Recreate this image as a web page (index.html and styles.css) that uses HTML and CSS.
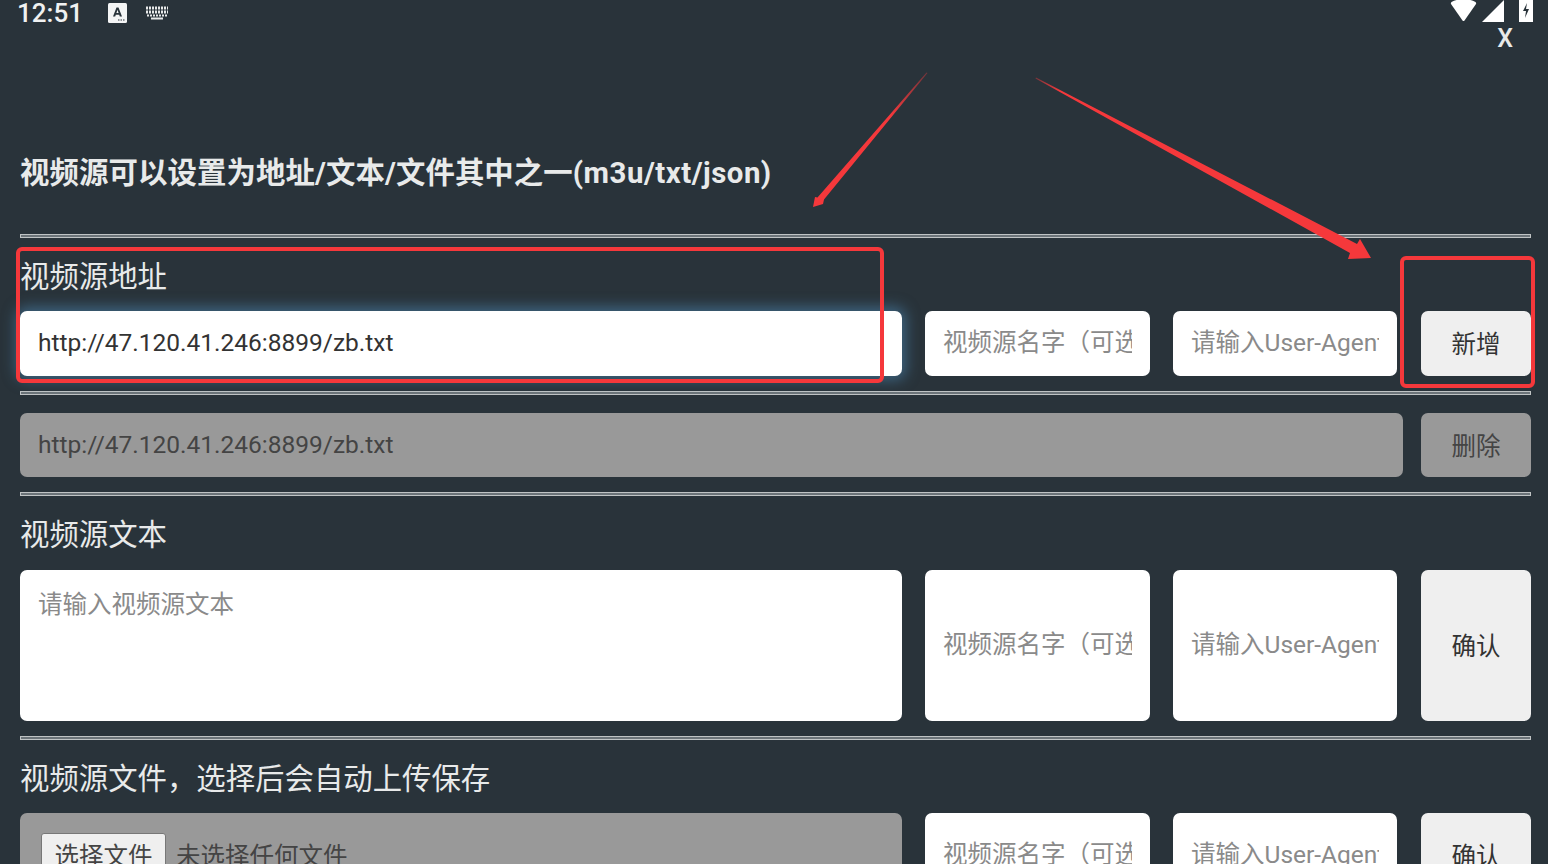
FILE: index.html
```html
<!DOCTYPE html>
<html lang="zh-CN">
  <head>
    <meta charset="UTF-8" />
    <meta name="viewport" content="width=device-width, initial-scale=1.0" />
    <title>视频源设置</title>
    <link rel="stylesheet" href="styles.css">
  </head>
  <body>
    <!-- 状态栏 -->
    <div class="status-bar">
      <div class="status-left">
        <span class="clock">12:51</span>
        <svg class="icon-a" width="19" height="20" viewBox="0 0 19 20">
          <rect x="0" y="0" width="19" height="20" rx="1.5" fill="#f4f5f5" />
          <path d="M5 13.5 8.5 4.5h2L14 13.5h-2.2l-.6-1.8H7.8l-.6 1.8zM8.4 10h2.2L9.5 6.8z" fill="#29333a" />
          <path d="M10 17h1.5M12.5 17H14M15 17h1.5" stroke="#29333a" stroke-width="1.2" />
        </svg>
        <svg class="icon-keys" width="24" height="14" viewBox="0 0 24 14">
          <path d="M1 2h22M1 6h22" stroke="#e8eaea" stroke-width="3" stroke-dasharray="2 1" />
          <path d="M2 9.5h20" stroke="#e8eaea" stroke-width="2" stroke-dasharray="2 1" />
          <path d="M6 12.5h12" stroke="#e8eaea" stroke-width="2" />
        </svg>
      </div>
      <div class="status-right">
        <svg width="27" height="23" viewBox="0 0 27 23">
          <path d="M1.5 3Q13.5-3 25.5 3Q26.5 4 26 5L14.5 21.5Q13.5 22.5 12.5 21.5L1 5Q.5 4 1.5 3Z" fill="#fff" />
        </svg>
        <svg width="22" height="23" viewBox="0 0 22 23">
          <path d="M0 23 22 1V23Z" fill="#fff" />
        </svg>
        <svg width="14" height="23" viewBox="0 0 14 23">
          <path d="M0 1H14V23H0Z" fill="#fff" />
          <path d="M8 4 4 12H7L6 19 10 10H7Z" fill="#29333a" />
        </svg>
      </div>
    </div>
    <div class="close-row"><span class="close-btn">X</span></div>

    <h2 class="page-title">视频源可以设置为地址/文本/文件其中之一<span class="title-latin">(m3u/txt/json)</span></h2>
    <hr />

    <div class="section-label">视频源地址</div>
    <div class="source-row">
      <input class="field field-focus" type="text" value="http://47.120.41.246:8899/zb.txt" />
      <input class="field" type="text" placeholder="视频源名字（可选）" />
      <input class="field" type="text" placeholder="请输入User-Agent" />
      <button class="btn">新增</button>
    </div>
    <hr class="tight" />
    <div class="saved-row">
      <input class="field field-off" type="text" value="http://47.120.41.246:8899/zb.txt" disabled />
      <button class="btn btn-off">删除</button>
    </div>
    <hr class="tight" />

    <div class="section-label">视频源文本</div>
    <div class="source-row source-row-tall">
      <textarea class="field field-area" placeholder="请输入视频源文本"></textarea>
      <input class="field" type="text" placeholder="视频源名字（可选）" />
      <input class="field" type="text" placeholder="请输入User-Agent" />
      <button class="btn">确认</button>
    </div>
    <hr class="tight" />

    <div class="section-label">视频源文件，选择后会自动上传保存</div>
    <div class="source-row source-row-file">
      <div class="field field-off file-box">
        <span class="file-btn">选择文件</span>
        <span class="file-name">未选择任何文件</span>
      </div>
      <input class="field" type="text" placeholder="视频源名字（可选）" />
      <input class="field" type="text" placeholder="请输入User-Agent" />
      <button class="btn">确认</button>
    </div>

    <!-- 红色标注 -->
    <svg class="marks" width="1548" height="864" viewBox="0 0 1548 864">
      <defs>
        <linearGradient id="fadeLeft" gradientUnits="userSpaceOnUse" x1="927" y1="73" x2="890" y2="116">
          <stop offset="0" stop-color="#f5383b" stop-opacity="0.35" />
          <stop offset="1" stop-color="#f5383b" />
        </linearGradient>
        <linearGradient id="fadeRight" gradientUnits="userSpaceOnUse" x1="1036" y1="78" x2="1060" y2="91">
          <stop offset="0" stop-color="#f5383b" stop-opacity="0.4" />
          <stop offset="1" stop-color="#f5383b" />
        </linearGradient>
      </defs>
      <rect x="18" y="249" width="864" height="132" rx="4" class="mark-box" />
      <rect x="1402" y="258" width="131" height="128" rx="4" class="mark-box" />
      <path d="M927.5 73 824 199.5 823 204 813 207 815 197 817.5 197.5 926.5 72.5Z" fill="url(#fadeLeft)" />
      <path d="M1036 77.5 1357 244 1360 239 1371 258 1348 259 1350 253 1035.5 78.5Z" fill="url(#fadeRight)" />
    </svg>
  </body>
</html>
```

FILE: styles.css
```css
html {
  height: 100%;
  overflow: hidden;
}
body {
  margin: 0;
  padding: 0 17px 0 20px;
  height: 100%;
  overflow: hidden;
  box-sizing: border-box;
  background-color: #29333a;
  color: #e8eaea;
  font-family: Roboto, "Noto Sans CJK SC", sans-serif;
  font-size: 24.5px;
}
.status-bar {
  display: flex;
  justify-content: space-between;
  align-items: flex-start;
  height: 26px;
}
.status-left {
  display: flex;
  align-items: center;
  height: 26px;
}
.clock {
  margin-left: -3px;
  font-size: 26px;
  font-weight: 500;
  color: #f0f1f1;
}
.icon-a {
  margin-left: 25px;
}
.icon-keys {
  margin-left: 18px;
}
.status-right {
  display: flex;
  gap: 5px;
  margin-top: -1px;
}
.status-right svg:last-child {
  margin-left: 10px;
  margin-right: -2px;
}
.close-row {
  display: flex;
  justify-content: flex-end;
  height: 24px;
}
.close-btn {
  margin-right: 18px;
  font-size: 25px;
  font-weight: 500;
  line-height: 25px;
}
.page-title {
  margin: 97px 0 0;
  font-size: 29.4px;
  font-weight: 700;
  letter-spacing: 0.1px;
  line-height: 52px;
}
.title-latin {
  letter-spacing: 0.5px;
}
hr {
  margin: 35px 0 0;
  height: 4px;
  box-sizing: border-box;
  border: 1px solid #bfc3c4;
  background: #6b7378;
}
hr.tight {
  margin-top: 15px;
}
.section-label {
  margin-top: 17px;
  font-size: 29.4px;
  line-height: 44px;
}
.source-row {
  display: grid;
  grid-template-columns: 882px 225px 224px 110px;
  column-gap: 23px;
  height: 65px;
  margin-top: 12px;
}
.source-row .btn {
  margin-left: 1px;
}
.source-row-tall {
  height: 151px;
  margin-top: 13px;
}
.source-row-file {
  height: 85px;
}
.saved-row {
  display: grid;
  grid-template-columns: 1fr 110px;
  gap: 18px;
  height: 64px;
  margin-top: 18px;
}
.field {
  box-sizing: border-box;
  width: 100%;
  height: 100%;
  padding: 0 18px 2px;
  border: 0;
  border-radius: 7px;
  background-color: #fff;
  color: #333;
  font-family: inherit;
  font-size: 24.5px;
  outline: none;
}
.field::placeholder {
  color: #8a8a8a;
}
.field-focus {
  box-shadow: 0 0 14px 4px rgba(82, 150, 200, 0.5);
}
.field-off {
  background-color: #999;
  color: #444;
  -webkit-text-fill-color: #444;
  opacity: 1;
}
.field-area {
  padding-top: 18px;
  resize: none;
  overflow: hidden;
  line-height: 34px;
}
.btn {
  width: 110px;
  height: 100%;
  padding: 0 0 2px;
  border: 0;
  border-radius: 7px;
  background-color: #efefef;
  color: #333;
  font-family: inherit;
  font-size: 24.5px;
}
.btn-off {
  background-color: #999;
  color: #444;
}
.file-box {
  display: flex;
  align-items: flex-start;
  padding: 20px 0 0 21px;
}
.file-btn {
  box-sizing: border-box;
  width: 125px;
  height: 48px;
  border: 1px solid #777;
  border-radius: 3px;
  background-color: #efefef;
  color: #222;
  text-align: center;
  line-height: 46px;
}
.file-name {
  margin-left: 10px;
  color: #333;
  line-height: 48px;
}
/* 标注层 */
.marks {
  position: absolute;
  top: 0;
  left: 0;
  pointer-events: none;
}
.mark-box {
  fill: none;
  stroke: #f5383b;
  stroke-width: 4;
}
```
